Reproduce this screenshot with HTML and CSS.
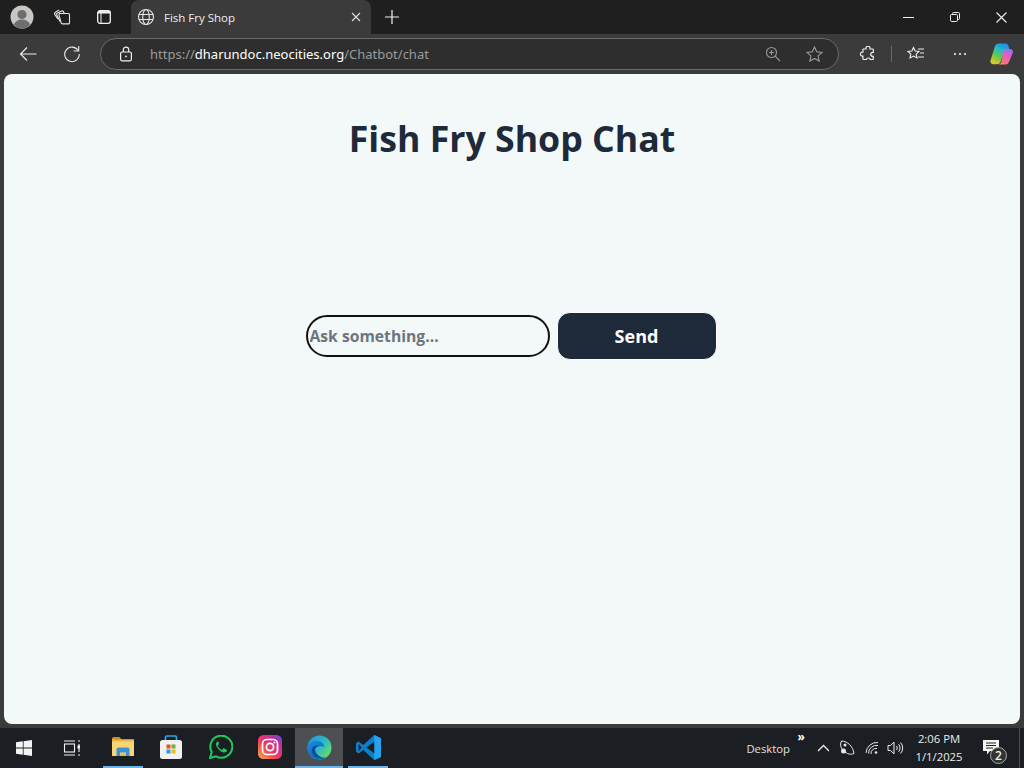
FILE: index.html
```html
<!DOCTYPE html>
<html lang="en">
<head>
<meta charset="utf-8">
<title>Fish Fry Shop</title>
<link rel="stylesheet" href="styles.css">
</head>
<body>
<div class="tabstrip">
  <div class="tabstrip-left">
    <svg class="avatar" width="24" height="24" viewBox="0 0 24 24"><circle cx="12" cy="12" r="11.5" fill="#c9c6c4"/><circle cx="12" cy="9.500" r="4.600" fill="#6e6e6e"/><path d="M3.800 19.500c1.600-3.600 4.600-5 8.200-5s6.600 1.400 8.200 5A11.500 11.500 0 0 1 12 23.500a11.500 11.500 0 0 1-8.200-4z" fill="#6e6e6e"/></svg>
    <svg class="tool-a" width="18" height="18" viewBox="0 0 18 18" fill="none" stroke="#e8e8e8" stroke-width="1.100"><path d="M7.500 5.500h7.800a1.200 1.200 0 0 1 1.200 1.200v8a1.200 1.200 0 0 1-1.200 1.200H9.300a1.200 1.200 0 0 1-1.100-.8L6 7.100a1.200 1.200 0 0 1 1.500-1.600z"/><path d="M7 13.500 3.700 6.700a1.200 1.200 0 0 1 .6-1.600L8.800 3a1.200 1.200 0 0 1 1.600.6l.9 1.900"/><path d="M4.800 11 1.700 6.200a1.200 1.200 0 0 1 .4-1.700l4-2.600"/></svg>
    <svg class="tool-b" width="16" height="16" viewBox="0 0 16 16" fill="none" stroke="#f4f4f4" stroke-width="1.300"><rect x="1.700" y="1.700" width="12.600" height="12.600" rx="2.200"/><path d="M2 3.300h12" stroke-width="2.400"/><path d="M5 4v10" stroke-width="1"/></svg>
    <div class="tab">
      <svg width="18" height="18" viewBox="0 0 18 18" fill="none" stroke="#e6e6e6" stroke-width="1.100"><circle cx="9" cy="9" r="7.500"/><ellipse cx="9" cy="9" rx="3.300" ry="7.500"/><path d="M2 6.500h14M2 11.500h14"/></svg>
      <span class="tab-title">Fish Fry Shop</span>
      <svg class="tab-x" width="10" height="10" viewBox="0 0 10 10" stroke="#e0e0e0" stroke-width="1.100"><path d="M1 1l8 8M9 1 1 9"/></svg>
    </div>
    <svg class="new-tab" width="16" height="16" viewBox="0 0 16 16" stroke="#f2f2f2" stroke-width="1.200"><path d="M8 1v14M1 8h14"/></svg>
  </div>
  <div class="window-controls">
    <svg width="11" height="10" viewBox="0 0 11 10" stroke="#f0f0f0" stroke-width="1"><path d="M0 5.500h11"/></svg>
    <svg width="10" height="10" viewBox="0 0 10 10" fill="none" stroke="#f0f0f0" stroke-width="1"><rect x=".5" y="2.500" width="7" height="7" rx="1.200"/><path d="M2.500 2.500V1.700A1.200 1.200 0 0 1 3.700.5h4.600a1.200 1.200 0 0 1 1.200 1.200v4.600a1.200 1.200 0 0 1-1.200 1.200h-.8"/></svg>
    <svg width="11" height="11" viewBox="0 0 11 11" stroke="#f0f0f0" stroke-width="1.100"><path d="M.5.500l10 10M10.500.500l-10 10"/></svg>
  </div>
</div>

<div class="toolbar">
  <svg class="back" width="18" height="16" viewBox="0 0 18 16" fill="none" stroke="#efefef" stroke-width="1.100"><path d="M17.500 8H1.500M8 1.500 1.500 8 8 14.500"/></svg>
  <svg class="reload" width="18" height="18" viewBox="0 0 18 18" fill="none" stroke="#e8e8e8" stroke-width="1.100"><path d="M15.200 5.500A7.300 7.300 0 1 0 16.300 9"/><path d="M15.700 1v5h-5"/></svg>
  <div class="address">
    <svg class="lock" width="14" height="16" viewBox="0 0 14 16" fill="none" stroke="#f0f0f0" stroke-width="1.200"><rect x="1.600" y="6" width="10.800" height="8.800" rx="1.500"/><path d="M4.300 6V3.800a2.700 2.700 0 0 1 5.400 0V6"/><circle cx="7" cy="10.400" r=".9" fill="#f0f0f0" stroke="none"/></svg>
    <span class="url"><span class="url-dim">https://</span><span class="url-host">dharundoc.neocities.org</span><span class="url-dim">/Chatbot/chat</span></span>
    <svg class="zoom-icon" width="16" height="16" viewBox="0 0 16 16" fill="none" stroke="#9a9a9a" stroke-width="1.100"><circle cx="6.500" cy="6.500" r="5"/><path d="M10.200 10.200 15 15M4 6.500h5M6.500 4v5"/></svg>
    <svg class="star" width="17" height="16" viewBox="0 0 17 16" fill="none" stroke="#9a9a9a" stroke-width="1.100"><path d="M8.500 1l2.200 4.800 5.300.6-3.900 3.500 1.100 5.200-4.700-2.700-4.700 2.700 1.100-5.200L1 6.400l5.300-.6z"/></svg>
  </div>
  <svg class="ext" width="16" height="16" viewBox="0 0 16 16" fill="none" stroke="#f0f0f0" stroke-width="1.200"><path d="M6 2.200a2 2 0 0 1 4 0V3h2.500a.8.800 0 0 1 .8.800v2.500h-.6a2 2 0 0 0 0 4h.6v2.400a.8.800 0 0 1-.8.800h-2.200V14a2 2 0 0 0-4 0v-.5H3.700a.8.800 0 0 1-.8-.8v-2.500h-.5a2 2 0 0 1 0-4h.5V3.800a.8.800 0 0 1 .8-.8H6z"/></svg>
  <span class="divider"></span>
  <svg class="favs" width="18" height="16" viewBox="0 0 18 16" fill="none" stroke="#f0f0f0" stroke-width="1.100"><path d="M6.500 1.500 8.200 5l3.800.5-2.800 2.600.8 3.900-3.500-1.900L3 12l.8-3.900L1 5.500 4.800 5zM11 3h6M13 7h4M11 11h6"/></svg>
  <svg class="more" width="14" height="4" viewBox="0 0 14 4" fill="#f0f0f0"><circle cx="2" cy="2" r="1.100"/><circle cx="7" cy="2" r="1.100"/><circle cx="12" cy="2" r="1.100"/></svg>
  <svg class="copilot" width="23" height="22" viewBox="0 0 23 22">
    <defs>
      <linearGradient id="cpa" x1="0.700" y1="0" x2="0.200" y2="1"><stop offset="0" stop-color="#1f8ff0"/><stop offset=".3" stop-color="#22b8c8"/><stop offset=".6" stop-color="#5fca50"/><stop offset="1" stop-color="#f2c32a"/></linearGradient>
      <linearGradient id="cpb" x1="0.800" y1="0" x2="0.200" y2="1"><stop offset="0" stop-color="#9a6df0"/><stop offset=".4" stop-color="#e05fc0"/><stop offset=".8" stop-color="#fb6f80"/><stop offset="1" stop-color="#f79a4a"/></linearGradient>
    </defs>
    <path d="M8.500 .5h7.200a2.800 2.800 0 0 1 2.700 2.100l1 3.400H15L10.500 19a3.500 3.500 0 0 1-3.300 2.300H3.500A3 3 0 0 1 .6 17.200L5 3A3.600 3.600 0 0 1 8.500 .5z" fill="url(#cpa)"/>
    <path d="M13.500 6h6.700a2.800 2.800 0 0 1 2.600 3.700L19 19a3.700 3.700 0 0 1-3.500 2.500H8.500a3.300 3.300 0 0 0 2.800-2.300z" fill="url(#cpb)"/>
  </svg>
</div>

<main class="page">
  <h1 class="page-title">Fish Fry Shop Chat</h1>
  <div class="chat-row">
    <input class="chat-input" type="text" placeholder="Ask something...">
    <button class="send" type="button">Send</button>
  </div>
</main>

<footer class="taskbar">
  <div class="task-left">
    <svg class="win" width="16" height="16" viewBox="0 0 16 16" fill="#f4f4f4"><path d="M0 2.300 6.800 1.300v6.300H0zM7.600 1.200 16 0v7.600H7.600zM0 8.400h6.800v6.300L0 13.700zM7.600 8.400H16V16L7.600 14.800z"/></svg>
    <svg class="taskview" width="18" height="16" viewBox="0 0 18 16" fill="none" stroke="#f2f2f2" stroke-width="1.100"><rect x="1.500" y="4" width="10" height="8"/><path d="M1 1h11M1 15h11M15 1h2M15 15h2M16 4v8"/><rect x="14.500" y="5.500" width="2.500" height="3" fill="#f2f2f2" stroke="none"/></svg>
    <div class="task-item narrow running explorer">
      <svg width="22" height="20" viewBox="0 0 22 20"><path d="M0 1.500A1.500 1.500 0 0 1 1.500 0H7.500l2 2.500H0z" fill="#c98f1e"/><path d="M0 2.500h22V19H0z" fill="#f7d676"/><path d="M0 2.500h22V4.500H0z" fill="#e8b948"/><path d="M4.500 19v-6.500A2 2 0 0 1 6.500 10.500h9a2 2 0 0 1 2 2V19H14v-3.500H8V19z" fill="#3a93da"/><path d="M8 16.500h6V19H8z" fill="#f0b73c"/></svg>
    </div>
    <div class="task-item narrow store">
      <svg width="24" height="24" viewBox="0 0 24 24"><path d="M6.500 6V2.500A1.500 1.500 0 0 1 8 1h8a1.500 1.500 0 0 1 1.500 1.500V6" fill="none" stroke="#2ea6e6" stroke-width="1.700"/><rect x="1" y="5" width="22" height="19" rx="2.500" fill="#f1f1f1"/><rect x="7.500" y="9.500" width="4" height="4" fill="#e8502a"/><rect x="12.500" y="9.500" width="4" height="4" fill="#6cb52d"/><rect x="7.500" y="14.500" width="4" height="4" fill="#1ea2e8"/><rect x="12.500" y="14.500" width="4" height="4" fill="#f5b61a"/></svg>
    </div>
    <div class="task-item">
      <svg width="24" height="24" viewBox="0 0 24 24"><path d="M1 23l1.700-6A11 11 0 1 1 7 21.300z" fill="none" stroke="#1fc95d" stroke-width="2"/><path d="M8.500 6.500c-.8.300-1.700 1.500-1.500 3 .4 3 4.500 7.500 8 8 1.500.2 2.700-.8 3-2 .1-.5-.1-.8-.5-1l-2.300-1.100c-.4-.2-.7-.1-1 .2l-.9 1.100c-.2.200-.4.200-.7.100-1.700-.7-3-2-3.900-3.700-.1-.3-.1-.5.100-.7l.8-.9c.2-.3.300-.5.100-.9L9.800 7c-.2-.4-.5-.6-1.300-.5z" fill="#1fc95d"/></svg>
    </div>
    <div class="task-item">
      <svg width="24" height="24" viewBox="0 0 24 24">
        <defs><linearGradient id="ig" x1="0" y1="1" x2="1" y2="0"><stop offset="0" stop-color="#fbb13a"/><stop offset=".4" stop-color="#ee3f5c"/><stop offset=".75" stop-color="#c22f9f"/><stop offset="1" stop-color="#5a50d6"/></linearGradient></defs>
        <rect width="24" height="24" rx="5.500" fill="url(#ig)"/><rect x="4.500" y="4.500" width="15" height="15" rx="4.300" fill="none" stroke="#fff" stroke-width="1.700"/><circle cx="12" cy="12" r="3.600" fill="none" stroke="#fff" stroke-width="1.700"/><circle cx="16.500" cy="7.500" r="1" fill="#fff"/></svg>
    </div>
    <div class="task-item active running">
      <svg width="25" height="25" viewBox="0 0 26 26">
        <defs>
          <linearGradient id="ed" x1="0" y1="0" x2="1" y2="0.800"><stop offset="0" stop-color="#1f8fd8"/><stop offset=".55" stop-color="#2fb9c8"/><stop offset="1" stop-color="#6fe05a"/></linearGradient>
          <linearGradient id="edb" x1="0" y1="0" x2="0.600" y2="1"><stop offset="0" stop-color="#1a8fe0"/><stop offset="1" stop-color="#0b62b8"/></linearGradient>
        </defs>
        <circle cx="13" cy="13" r="12.500" fill="url(#ed)"/>
        <path d="M.6 13C1.500 8 6 5.500 10.500 6c4 .4 7 3 7.500 6.300-1.500-1-8.500-1.300-9.500 2-.8 3 2 7 6 8.500 2 .8 4 .8 5.500.5A12.500 12.500 0 0 1 .6 13z" fill="url(#edb)"/>
        <path d="M8.500 14.300c-.8 3 2 7 6 8.500-5 1.500-9.800-2-9.500-7 .1-2.600 2-4.500 4.500-4.800 1-.1 2 .1 2.500.4-1.500.3-3 1.300-3.500 2.900z" fill="#0a4a94"/>
      </svg>
    </div>
    <div class="task-item narrow running vscode">
      <svg width="25" height="25" viewBox="0 0 24 24"><path d="M17.500 0 24 3v18l-6.500 3L7 14.500l-4.500 3.200L0 16V8l2.500-1.700L7 9.500z" fill="#0f7fcc"/><path d="M17.500 0 24 3v18l-6.500 3z" fill="#25a5ee"/><path d="M17.500 6.500 10 12l7.500 5.500z" fill="#1b1f23"/><path d="M2.500 8.700 5.500 12l-3 3.300z" fill="#1b1f23"/></svg>
    </div>
  </div>
  <div class="task-right">
    <span class="desktop-label">Desktop</span>
    <span class="chevrons">»</span>
    <svg class="caret" width="13" height="8" viewBox="0 0 13 8" fill="none" stroke="#f0f0f0" stroke-width="1.300"><path d="M1 7l5.500-5.500L12 7"/></svg>
    <svg class="sat" width="16" height="16" viewBox="0 0 16 16" fill="none" stroke="#e8e8e8" stroke-width="1"><path d="M2.500 1C8 1 14 6 15 13.500c-4.500 2-9-.5-12-4.500C1.500 7 1 3.500 2.500 1z"/><circle cx="4.500" cy="11" r="2.500" fill="#e8e8e8" stroke="none"/><circle cx="6" cy="5" r="1.500" fill="#e8e8e8" stroke="none"/></svg>
    <svg class="wifi" width="14" height="14" viewBox="0 0 14 14" fill="none" stroke="#e8e8e8" stroke-width="1"><path d="M1 12A11 11 0 0 1 13 1.500M3.500 12.500A8 8 0 0 1 13 4.500M6 13a5 5 0 0 1 6-5.500"/><circle cx="11" cy="11.500" r="1.300" fill="#e8e8e8" stroke="none"/></svg>
    <svg class="volume" width="17" height="14" viewBox="0 0 17 14" fill="none" stroke="#f0f0f0" stroke-width="1"><path d="M1 4.500h2.500L7 1.200v11.600L3.500 9.500H1zM9.500 5a3 3 0 0 1 0 4M11.500 3.200a5.500 5.500 0 0 1 0 7.600M13.500 1.500a8 8 0 0 1 0 11"/></svg>
    <div class="clock"><span>2:06 PM</span><span>1/1/2025</span></div>
    <div class="notify">
      <svg width="16" height="15" viewBox="0 0 16 15" fill="#f6f6f6"><path d="M0 0h16v11H7l-3 3.500V11H0z"/><path d="M3 3h10M3 5.500h10M3 8h7" stroke="#222" stroke-width="1"/></svg>
      <span class="badge">2</span>
    </div>
    <span class="show-desktop"></span>
  </div>
</footer>
</body>
</html>
```

FILE: styles.css
```css
* { box-sizing: border-box; }

html, body {
  margin: 0;
  height: 100%;
  overflow: hidden;
}

body {
  width: 1024px;
  height: 768px;
  display: flex;
  flex-direction: column;
  background: #3b3b3b;
  font-family: "Open Sans", "Noto Sans", "Liberation Sans", sans-serif;
  color: #fff;
}

svg { display: block; flex: none; }

.tabstrip {
  height: 34px;
  flex: none;
  background: #1f1f1f;
  display: flex;
  justify-content: space-between;
}

.tabstrip-left {
  display: flex;
  align-items: center;
  padding-left: 10px;
}

.tool-a { margin-left: 19px; }
.tool-b { margin-left: 25px; }

.tab {
  width: 240px;
  height: 34px;
  margin-left: 19px;
  padding: 0 10px 0 6px;
  background: #3b3b3b;
  border-radius: 8px 8px 0 0;
  display: flex;
  align-items: center;
}

.tab-title {
  flex: 1;
  margin-left: 9px;
  font-size: 11.500px;
  color: #f0f0f0;
}

.new-tab { margin-left: 13px; }

.window-controls {
  display: flex;
  align-items: center;
  gap: 36px;
  padding-right: 17px;
}

.toolbar {
  height: 40px;
  flex: none;
  display: flex;
  align-items: center;
  padding-left: 19px;
}

.reload { margin-left: 26px; }

.address {
  width: 739px;
  height: 32px;
  margin-left: 19px;
  padding: 0 15px 0 18px;
  border: 1px solid #6a6a6a;
  border-radius: 16px;
  background: #2e2e2e;
  display: flex;
  align-items: center;
}

.url {
  flex: 1;
  margin-left: 17px;
  font-size: 13px;
  white-space: nowrap;
  font-family: "Noto Sans", "Open Sans", sans-serif;
}

.url-dim { color: #9b9b9b; }
.url-host { color: #fff; }

.star { margin-left: 25px; }

.ext { margin-left: 21px; }

.divider {
  width: 1px;
  height: 16px;
  margin-left: 15px;
  background: #6a6a6a;
}

.favs { margin-left: 15px; }
.more { margin-left: 28px; }
.copilot { margin-left: 23px; }

.page {
  flex: none;
  height: 650px;
  margin: 0 4px;
  border-radius: 8px;
  background: #f3f8f8;
  display: flex;
  flex-direction: column;
  align-items: center;
}

.page-title {
  margin: 39px 0 0;
  font-size: 35.700px;
  line-height: 50px;
  font-weight: 700;
  color: #1e2a3a;
}

.chat-row {
  margin-top: 149px;
  padding-right: 2px;
  display: flex;
  align-items: center;
  gap: 7px;
}

.chat-input {
  width: 244px;
  height: 42px;
  padding: 0 2px;
  border: 2px solid #111;
  border-radius: 21px;
  background: #f3f8f8;
  font: 700 15.700px "Open Sans", "Noto Sans", sans-serif;
  outline: none;
}

.chat-input::placeholder { color: #6c757d; opacity: 1; }

.send {
  width: 160px;
  height: 48px;
  border: 1px solid #fff;
  border-radius: 13px;
  background: #1e2a3a;
  color: #fff;
  font: 700 18px "Open Sans", "Noto Sans", sans-serif;
}

.taskbar {
  flex: none;
  height: 40px;
  margin-top: 4px;
  background: #1b1f23;
  display: flex;
  justify-content: space-between;
}

.task-left {
  display: flex;
  align-items: center;
  gap: 1px;
}

.win { margin-left: 16px; }
.taskview { margin: 0 21px 0 30px; }

.task-item {
  width: 48px;
  height: 40px;
  display: flex;
  align-items: center;
  justify-content: center;
  border-bottom: 2px solid transparent;
}

.task-item.narrow { width: 40px; }
.task-item.explorer { margin-right: 7px; }
.task-item.store { margin-right: 5px; }
.task-item.vscode { margin-left: 4px; }
.task-item.running { border-bottom-color: #6cb4ec; }
.task-item.active { background: #4d5052; }

.task-right {
  display: flex;
  align-items: center;
  position: relative;
}

.desktop-label {
  font-size: 11.300px;
  color: #e0e0e0;
}

.chevrons {
  position: absolute;
  left: 51px;
  top: 0;
  font-size: 12px;
  font-weight: 700;
  line-height: 18px;
}

.caret { margin-left: 27px; }
.sat { margin-left: 9px; }
.wifi { margin-left: 10px; }
.volume { margin-left: 8px; }

.clock {
  width: 62px;
  margin-left: 4px;
  display: flex;
  flex-direction: column;
  align-items: center;
  font-size: 11.300px;
  line-height: 18px;
  color: #ececec;
}

.notify {
  position: relative;
  width: 49px;
  height: 40px;
  padding: 12px 0 0 13px;
}

.badge {
  position: absolute;
  left: 20px;
  top: 19px;
  width: 17px;
  height: 17px;
  border: 1px solid #aaa;
  border-radius: 50%;
  background: #333;
  color: #f0f0f0;
  font-size: 12px;
  line-height: 15px;
  text-align: center;
  font-weight: 600;
}

.show-desktop {
  width: 5px;
  height: 40px;
  border-left: 1px solid #4a4d50;
}
```
